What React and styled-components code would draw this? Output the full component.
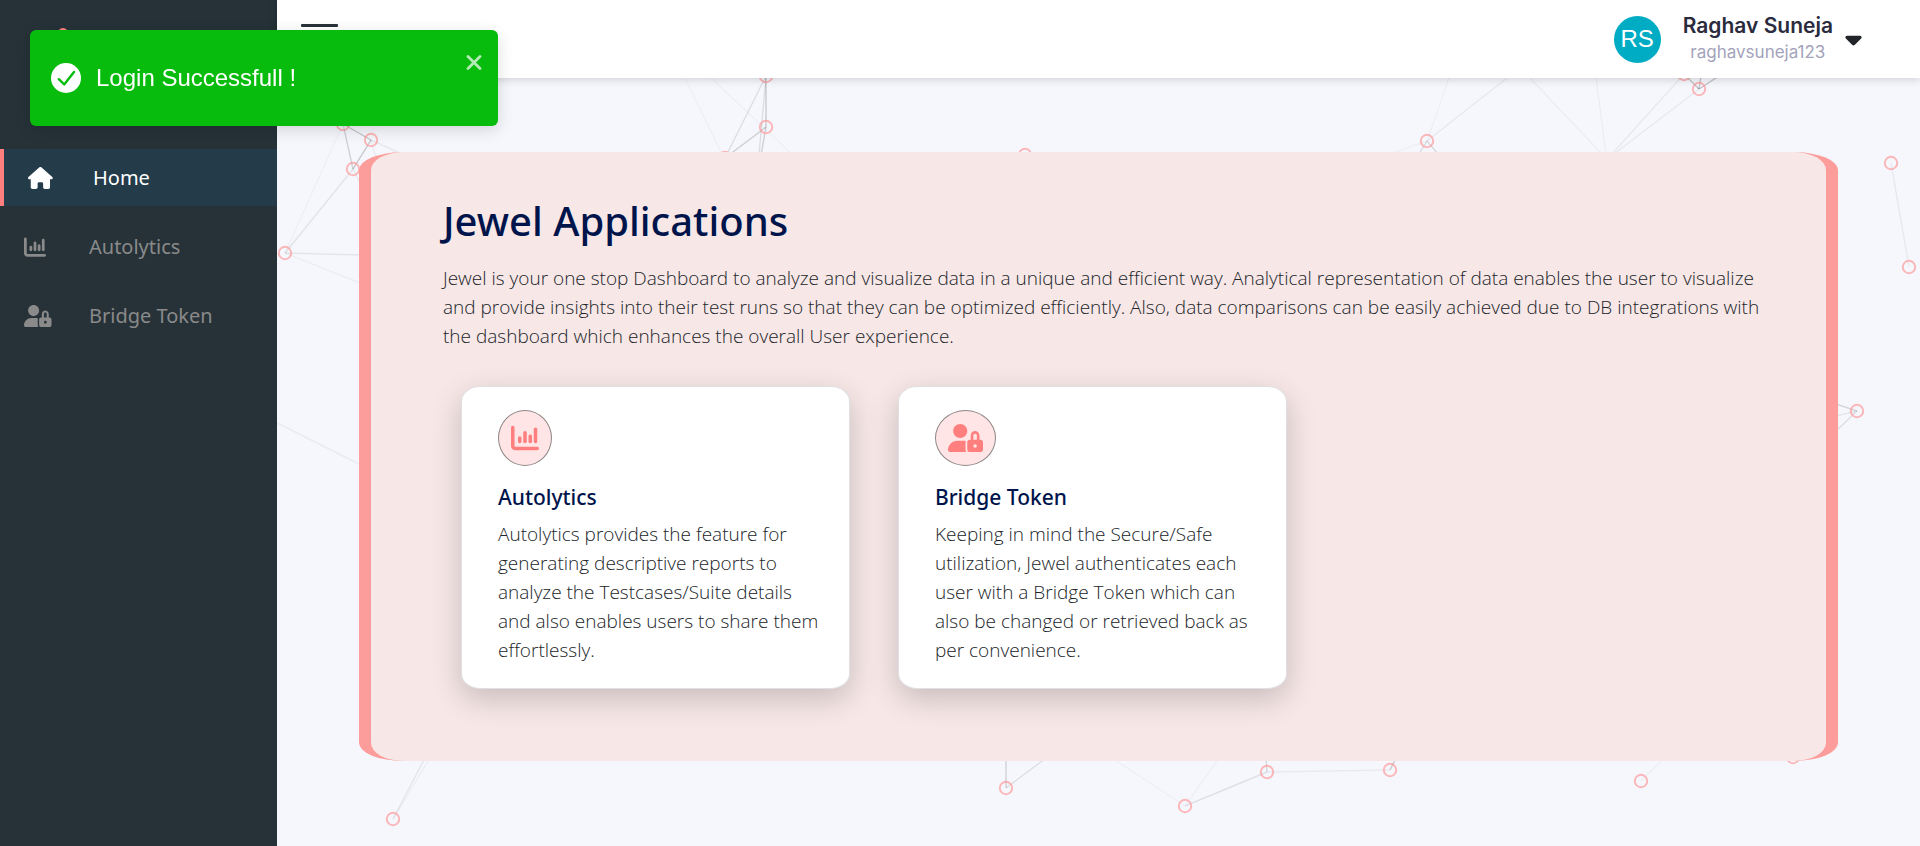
import React from "react";
import styled, { createGlobalStyle } from "styled-components";
import { FaHouse, FaCaretDown } from "react-icons/fa6";

const GlobalStyle = createGlobalStyle`
  *, *::before, *::after { box-sizing: border-box; }
  body {
    margin: 0;
    background: #f5f7fc;
    font-family: "Noto Sans", "Open Sans", sans-serif;
  }
  h1, h2, p, ul { margin: 0; padding: 0; }
`;

const Shell = styled.div`
  display: flex;
  min-height: 100vh;
`;

const Sidebar = styled.aside`
  flex: 0 0 277px;
  background: #263238;
`;

const Brand = styled.div`
  height: 149px;
  padding: 28px 48px;
  color: #ff7f7f;
`;

const NavList = styled.ul`
  display: flex;
  flex-direction: column;
  gap: 12px;
  list-style: none;
`;

const NavLink = styled.a`
  display: flex;
  align-items: center;
  height: 57px;
  padding-left: 24px;
  font-size: 20px;
  text-decoration: none;
  color: ${(p) => (p.$active ? "#ffffff" : "#8a8a8a")};
  background: ${(p) => (p.$active ? "#243b49" : "transparent")};
  border-left: ${(p) => (p.$active ? "4px solid #ff7f7f" : "0")};
`;

const NavIcon = styled.span`
  display: flex;
  width: 65px;

  svg {
    width: auto;
    height: 22px;
  }
`;

const HouseIcon = styled(FaHouse)`
  aspect-ratio: 9 / 8;
`;

const Page = styled.div`
  flex: 1;
  min-width: 0;
  display: flex;
  flex-direction: column;
`;

const Header = styled.header`
  position: relative;
  z-index: 1;
  display: flex;
  justify-content: space-between;
  align-items: center;
  height: 78px;
  padding: 0 58px 0 24px;
  background: #ffffff;
  box-shadow: 0 2px 8px rgba(0, 0, 0, 0.15);
`;

const MenuButton = styled.button`
  display: flex;
  flex-direction: column;
  justify-content: space-between;
  width: 37px;
  height: 30px;
  padding: 0;
  border: 0;
  background: none;
`;

const MenuBar = styled.span`
  height: 3px;
  border-radius: 1px;
  background: #263238;
`;

const Account = styled.button`
  display: flex;
  align-items: center;
  padding: 0;
  border: 0;
  background: none;
  font-family: Inter, sans-serif;
`;

const Avatar = styled.span`
  display: flex;
  align-items: center;
  justify-content: center;
  width: 47px;
  height: 47px;
  margin-right: 22px;
  border-radius: 50%;
  background: #00acc3;
  color: #ffffff;
  font-family: "Liberation Sans", Arial, sans-serif;
  font-size: 24px;
`;

const Identity = styled.span`
  display: flex;
  flex-direction: column;
  align-items: center;
  margin-right: 12px;
`;

const FullName = styled.span`
  font-size: 21px;
  line-height: 26px;
  font-weight: 600;
  color: #2b2b3d;
`;

const UserName = styled.span`
  font-size: 17px;
  line-height: 26px;
  font-weight: 400;
  color: #a3a3bb;
`;

const Caret = styled(FaCaretDown)`
  width: 17px;
  height: 26px;
  color: #212529;
`;

const Main = styled.main`
  position: relative;
  flex: 1;
  padding: 74px 82px 84px;
`;

const Network = styled.svg`
  position: absolute;
  inset: 0;
  width: 100%;
  height: 100%;
`;

const Panel = styled.section`
  position: relative;
  padding: 39px 56px 72px 72px;
  border: solid #fd9d9b;
  border-width: 0 12px;
  border-radius: 3%;
  background: #f7e7e7;
`;

const PanelTitle = styled.h1`
  font-size: 40px;
  line-height: 60px;
  font-weight: 500;
  color: #00144c;
`;

const Body = styled.p`
  font-family: "Open Sans", sans-serif;
  font-size: 19px;
  line-height: 29px;
  font-weight: 300;
  color: #212529;
`;

const Intro = styled(Body)`
  margin-top: 13px;
`;

const Cards = styled.div`
  display: flex;
  flex-wrap: wrap;
  gap: 48px;
  margin: 35px 0 0 18px;
`;

const Card = styled.article`
  width: 389px;
  padding: 23px 24px 23px 36px;
  border: 1px solid #dfe0e3;
  border-radius: 5%;
  background: #ffffff;
  box-shadow: 0 10px 30px rgba(0, 0, 0, 0.19);
`;

const Badge = styled.span`
  display: inline-flex;
  align-items: center;
  height: 56px;
  padding: 0 12px;
  border: 1px solid #8f8787;
  border-radius: 50%;
  background: #ffe5e5;
  color: #ff7f7f;
  vertical-align: top;

  svg {
    width: auto;
    height: 28px;
  }
`;

const CardTitle = styled.h2`
  margin-top: 13px;
  font-size: 21px;
  line-height: 36px;
  font-weight: 500;
  color: #00144c;
`;

const CardBody = styled(Body)`
  margin-top: 5px;
`;

const Toast = styled.div`
  position: fixed;
  z-index: 2;
  top: 30px;
  left: 30px;
  display: flex;
  align-items: center;
  gap: 15px;
  width: 468px;
  height: 96px;
  padding: 0 16px 0 21px;
  border-radius: 6px;
  background: #07bc0c;
  box-shadow: 0 4px 16px rgba(0, 0, 0, 0.14);
  color: #ffffff;
  font-family: "Liberation Sans", Arial, sans-serif;
  font-size: 24px;
`;

const ToastClose = styled.button`
  align-self: flex-start;
  display: flex;
  margin: 25px 0 0 auto;
  padding: 0;
  border: 0;
  background: none;
  color: rgba(255, 255, 255, 0.7);
`;

const nodes = [
  [343, 124], [371, 140], [353, 169], [285, 253], [766, 76], [766, 127],
  [725, 158], [393, 819], [1006, 788], [1185, 806], [1267, 772], [1390, 770],
  [1857, 411], [1641, 781], [1793, 757], [1025, 155], [1427, 141],
  [1684, 74], [1699, 89], [1891, 163], [1909, 267],
];

/* x1, y1, x2, y2, opacity */
const links = [
  [343, 124, 371, 140, 0.2], [343, 124, 353, 169, 0.15],
  [371, 140, 353, 169, 0.2], [353, 169, 285, 253, 0.08],
  [285, 253, 343, 124, 0.03], [285, 253, 360, 255, 0.07],
  [285, 253, 360, 283, 0.04], [371, 140, 402, 154, 0.06],
  [371, 140, 376, 158, 0.05], [353, 169, 362, 187, 0.06],
  [766, 76, 766, 127, 0.18], [766, 76, 725, 158, 0.1],
  [766, 127, 725, 158, 0.16], [766, 127, 761, 155, 0.16],
  [766, 76, 759, 155, 0.1], [685, 78, 722, 154, 0.03],
  [711, 78, 792, 154, 0.03], [277, 423, 361, 465, 0.05],
  [1427, 141, 1507, 78, 0.06], [1427, 141, 1449, 78, 0.03],
  [1530, 78, 1602, 154, 0.04], [1427, 141, 1390, 154, 0.03],
  [1427, 141, 1419, 154, 0.12], [1427, 141, 1438, 154, 0.12],
  [1596, 78, 1606, 154, 0.04], [1684, 74, 1612, 154, 0.06],
  [1699, 89, 1614, 154, 0.06], [1699, 89, 1719, 76, 0.2],
  [1699, 89, 1701, 76, 0.2], [1699, 89, 1686, 76, 0.2],
  [1891, 163, 1909, 267, 0.06], [1857, 411, 1836, 404, 0.13],
  [1857, 411, 1836, 416, 0.07], [1857, 411, 1836, 431, 0.1],
  [1641, 781, 1662, 760, 0.03], [393, 819, 425, 758, 0.07],
  [393, 819, 430, 758, 0.04], [1006, 788, 1006, 758, 0.15],
  [1006, 788, 1046, 758, 0.1], [1185, 806, 1112, 758, 0.03],
  [1185, 806, 1219, 758, 0.03], [1185, 806, 1267, 772, 0.09],
  [1267, 772, 1266, 758, 0.13], [1267, 772, 1390, 770, 0.05],
  [1390, 770, 1396, 758, 0.18],
];

function ChartIcon() {
  return (
    <svg width="512" height="512" viewBox="0 0 512 512" fill="currentColor" aria-hidden="true">
      <path d="M32 32C49.67 32 64 46.33 64 64V400C64 408.8 71.16 416 80 416H480C497.7 416 512 430.3 512 448C512 465.7 497.7 480 480 480H80C35.82 480 0 444.2 0 400V64C0 46.33 14.33 32 32 32zM160 224C177.7 224 192 238.3 192 256V320C192 337.7 177.7 352 160 352C142.3 352 128 337.7 128 320V256C128 238.3 142.3 224 160 224zM288 320C288 337.7 273.7 352 256 352C238.3 352 224 337.7 224 320V160C224 142.3 238.3 128 256 128C273.7 128 288 142.3 288 160V320zM352 192C369.7 192 384 206.3 384 224V320C384 337.7 369.7 352 352 352C334.3 352 320 337.7 320 320V224C320 206.3 334.3 192 352 192zM480 320C480 337.7 465.7 352 448 352C430.3 352 416 337.7 416 320V96C416 78.33 430.3 64 448 64C465.7 64 480 78.33 480 96V320z" />
    </svg>
  );
}

function UserLockIcon() {
  return (
    <svg width="640" height="512" viewBox="0 0 640 512" fill="currentColor" aria-hidden="true">
      <path d="M224 256c70.7 0 128-57.31 128-128S294.7 0 224 0C153.3 0 96 57.31 96 128S153.3 256 224 256zM320 336c0-8.672 1.738-16.87 4.303-24.7C308.6 306.6 291.9 304 274.7 304H173.3C77.61 304 0 381.7 0 477.3C0 496.5 15.52 512 34.66 512h301.7C326.3 498.6 320 482.1 320 464V336z" />
      <path fillRule="evenodd" d="M592 288H576V212.7c0-41.84-30.03-80.04-71.66-84.27C456.5 123.6 416 161.1 416 208V288h-16C373.6 288 352 309.6 352 336v128c0 26.4 21.6 48 48 48h192c26.4 0 48-21.6 48-48v-128C640 309.6 618.4 288 592 288zM496 432c-17.62 0-32-14.38-32-32s14.38-32 32-32s32 14.38 32 32S513.6 432 496 432zM528 288h-64V208c0-17.62 14.38-32 32-32s32 14.38 32 32V288z" />
    </svg>
  );
}

const applications = [
  {
    name: "Autolytics",
    icon: <ChartIcon />,
    text: "Autolytics provides the feature for generating descriptive reports to analyze the Testcases/Suite details and also enables users to share them effortlessly.",
  },
  {
    name: "Bridge Token",
    icon: <UserLockIcon />,
    text: "Keeping in mind the Secure/Safe utilization, Jewel authenticates each user with a Bridge Token which can also be changed or retrieved back as per convenience.",
  },
];

const navItems = [
  { name: "Home", icon: <HouseIcon />, active: true },
  ...applications.map(({ name, icon }) => ({ name, icon, active: false })),
];

function GemLogo() {
  return (
    <svg width="30" height="30" viewBox="0 0 30 30" aria-hidden="true">
      <path d="M12 1Q15-1 18 1L29 12 15 29 1 12z" fill="currentColor" />
    </svg>
  );
}

function NetworkBackdrop() {
  return (
    <Network viewBox="277 78 1643 768" preserveAspectRatio="xMinYMin slice" aria-hidden="true">
      {links.map(([x1, y1, x2, y2, opacity], i) => (
        <line key={i} x1={x1} y1={y1} x2={x2} y2={y2} stroke="#000" strokeOpacity={opacity} strokeWidth="1.4" />
      ))}
      {nodes.map(([x, y], i) => (
        <circle key={i} cx={x} cy={y} r="6.2" fill="none" stroke="#ff8f8f" strokeOpacity="0.62" strokeWidth="2" />
      ))}
    </Network>
  );
}

function SuccessToast() {
  return (
    <Toast role="alert">
      <svg width="30" height="30" viewBox="0 0 30 30" aria-hidden="true">
        <circle cx="15" cy="15" r="15" fill="#fff" />
        <path d="m7.8 16.2 5.4 5.2L23 9" fill="none" stroke="#07bc0c" strokeWidth="2.4" strokeLinecap="round" strokeLinejoin="round" />
      </svg>
      <span>Login Successfull !</span>
      <ToastClose type="button" aria-label="Close">
        <svg width="16" height="15" viewBox="0 0 16 15" aria-hidden="true">
          <path d="m2 1.5 12 12m0-12-12 12" fill="none" stroke="currentColor" strokeWidth="2.8" strokeLinecap="round" />
        </svg>
      </ToastClose>
    </Toast>
  );
}

export default function App() {
  return (
    <>
      <GlobalStyle />
      <Shell>
        <Sidebar>
          <Brand>
            <GemLogo />
          </Brand>
          <nav aria-label="Main">
            <NavList>
              {navItems.map(({ name, icon, active }) => (
                <li key={name}>
                  <NavLink href="#" $active={active}>
                    <NavIcon>{icon}</NavIcon>
                    {name}
                  </NavLink>
                </li>
              ))}
            </NavList>
          </nav>
        </Sidebar>
        <Page>
          <Header>
            <MenuButton type="button" aria-label="Toggle menu">
              <MenuBar />
              <MenuBar />
              <MenuBar />
            </MenuButton>
            <Account type="button">
              <Avatar>RS</Avatar>
              <Identity>
                <FullName>Raghav Suneja</FullName>
                <UserName>raghavsuneja123</UserName>
              </Identity>
              <Caret />
            </Account>
          </Header>
          <Main>
            <NetworkBackdrop />
            <Panel>
              <PanelTitle>Jewel Applications</PanelTitle>
              <Intro>
                Jewel is your one stop Dashboard to analyze and visualize data
                in a unique and efficient way. Analytical representation of data
                enables the user to visualize and provide insights into their
                test runs so that they can be optimized efficiently. Also, data
                comparisons can be easily achieved due to DB integrations with
                the dashboard which enhances the overall User experience.
              </Intro>
              <Cards>
                {applications.map(({ name, icon, text }) => (
                  <Card key={name}>
                    <Badge>{icon}</Badge>
                    <CardTitle>{name}</CardTitle>
                    <CardBody>{text}</CardBody>
                  </Card>
                ))}
              </Cards>
            </Panel>
          </Main>
        </Page>
      </Shell>
      <SuccessToast />
    </>
  );
}
